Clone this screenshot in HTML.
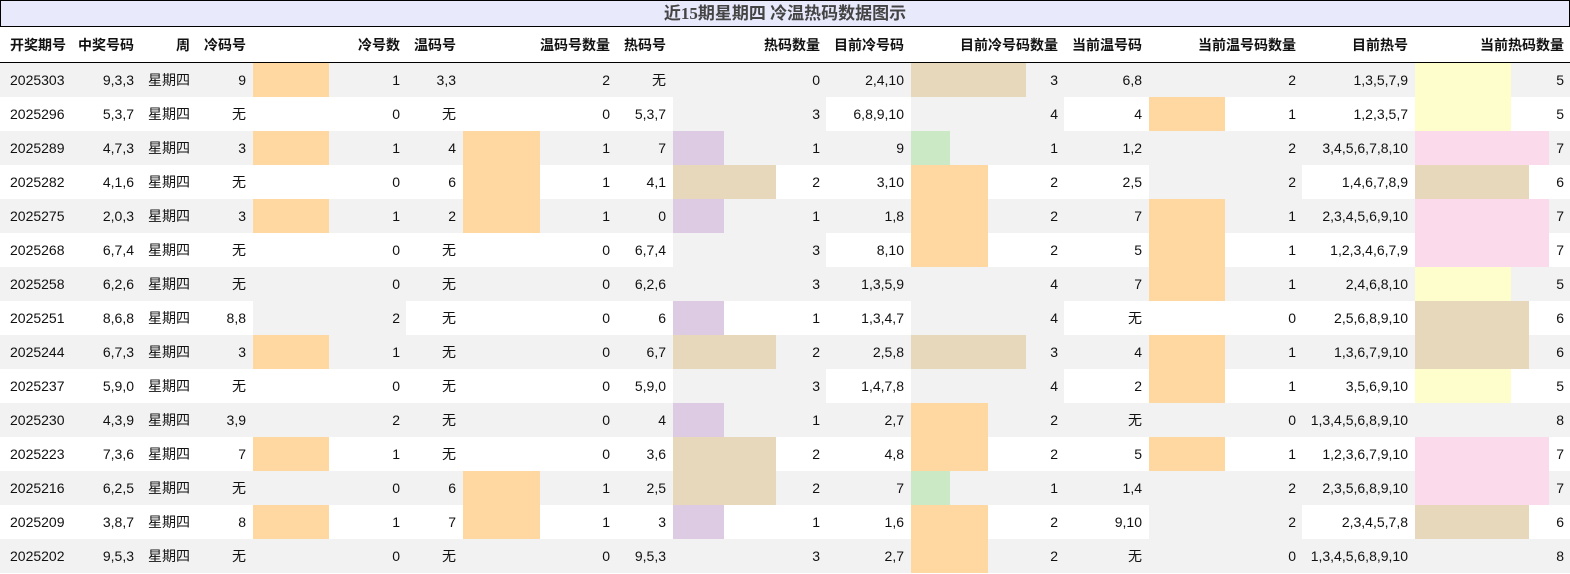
<!DOCTYPE html>
<html><head><meta charset="utf-8"><style>
*{margin:0;padding:0;box-sizing:border-box}
body{width:1570px;height:574px;background:#fff;font-family:"Liberation Sans","Noto Sans CJK SC",sans-serif;font-size:14px;color:#111;overflow:hidden}
.t{height:27px;border:1px solid #000;background:#e8eafc;text-align:center;font:bold 17px/25px "Liberation Serif","Noto Sans CJK SC",serif;color:#444;width:1570px}
.r{display:flex;height:34px;line-height:34px}
.h{height:36px;line-height:36px;font-weight:bold;font-size:14px;border-bottom:1px solid #000}
.h>div:nth-child(1){padding-left:8px}
.g{background:#f2f2f2}
.r>div{text-align:right;padding-right:6px;position:relative;white-space:nowrap}
.r>div:nth-child(1){width:72px;text-align:left;padding-left:10px}
.r>div:nth-child(2){width:68px}
.r>div:nth-child(3){width:56px}
.r>div:nth-child(4){width:56px}
.r>div:nth-child(5){width:154px}
.r>div:nth-child(6){width:56px}
.r>div:nth-child(7){width:154px}
.r>div:nth-child(8){width:56px}
.r>div:nth-child(9){width:154px}
.r>div:nth-child(10){width:84px}
.r>div:nth-child(11){width:154px}
.r>div:nth-child(12){width:84px}
.r>div:nth-child(13){width:154px}
.r>div:nth-child(14){width:112px}
.r>div:nth-child(15){width:154px;padding-right:4px}
i{position:absolute;left:1px;top:0;bottom:0}
.r span{position:relative}
.o{background:#fed7a1}.p{background:#ddcbe4}.n{background:#e7d8bc}.e{background:#cce9c6}.y{background:#fefdcc}.k{background:#fbdbeb}.s{background:#f2f2f2}
</style></head><body>
<div class="t">近15期星期四 冷温热码数据图示</div>
<div class="r h"><div>开奖期号</div><div>中奖号码</div><div>周</div><div>冷码号</div><div>冷号数</div><div>温码号</div><div>温码号数量</div><div>热码号</div><div>热码数量</div><div>目前冷号码</div><div>目前冷号码数量</div><div>当前温号码</div><div>当前温号码数量</div><div>目前热号</div><div>当前热码数量</div></div>

<div class="r g"><div>2025303</div><div>9,3,3</div><div>星期四</div><div>9</div><div><i class="o" style="width:76px"></i><span>1</span></div><div>3,3</div><div><i class="s" style="width:153px"></i><span>2</span></div><div>无</div><div><span>0</span></div><div>2,4,10</div><div><i class="n" style="width:115px"></i><span>3</span></div><div>6,8</div><div><i class="s" style="width:153px"></i><span>2</span></div><div>1,3,5,7,9</div><div><i class="y" style="width:96px"></i><span>5</span></div></div>

<div class="r"><div>2025296</div><div>5,3,7</div><div>星期四</div><div>无</div><div><span>0</span></div><div>无</div><div><span>0</span></div><div>5,3,7</div><div><i class="s" style="width:153px"></i><span>3</span></div><div>6,8,9,10</div><div><i class="s" style="width:153px"></i><span>4</span></div><div>4</div><div><i class="o" style="width:76px"></i><span>1</span></div><div>1,2,3,5,7</div><div><i class="y" style="width:96px"></i><span>5</span></div></div>

<div class="r g"><div>2025289</div><div>4,7,3</div><div>星期四</div><div>3</div><div><i class="o" style="width:76px"></i><span>1</span></div><div>4</div><div><i class="o" style="width:77px"></i><span>1</span></div><div>7</div><div><i class="p" style="width:51px"></i><span>1</span></div><div>9</div><div><i class="e" style="width:39px"></i><span>1</span></div><div>1,2</div><div><i class="s" style="width:153px"></i><span>2</span></div><div>3,4,5,6,7,8,10</div><div><i class="k" style="width:134px"></i><span>7</span></div></div>

<div class="r"><div>2025282</div><div>4,1,6</div><div>星期四</div><div>无</div><div><span>0</span></div><div>6</div><div><i class="o" style="width:77px"></i><span>1</span></div><div>4,1</div><div><i class="n" style="width:103px"></i><span>2</span></div><div>3,10</div><div><i class="o" style="width:77px"></i><span>2</span></div><div>2,5</div><div><i class="s" style="width:153px"></i><span>2</span></div><div>1,4,6,7,8,9</div><div><i class="n" style="width:114px"></i><span>6</span></div></div>

<div class="r g"><div>2025275</div><div>2,0,3</div><div>星期四</div><div>3</div><div><i class="o" style="width:76px"></i><span>1</span></div><div>2</div><div><i class="o" style="width:77px"></i><span>1</span></div><div>0</div><div><i class="p" style="width:51px"></i><span>1</span></div><div>1,8</div><div><i class="o" style="width:77px"></i><span>2</span></div><div>7</div><div><i class="o" style="width:76px"></i><span>1</span></div><div>2,3,4,5,6,9,10</div><div><i class="k" style="width:134px"></i><span>7</span></div></div>

<div class="r"><div>2025268</div><div>6,7,4</div><div>星期四</div><div>无</div><div><span>0</span></div><div>无</div><div><span>0</span></div><div>6,7,4</div><div><i class="s" style="width:153px"></i><span>3</span></div><div>8,10</div><div><i class="o" style="width:77px"></i><span>2</span></div><div>5</div><div><i class="o" style="width:76px"></i><span>1</span></div><div>1,2,3,4,6,7,9</div><div><i class="k" style="width:134px"></i><span>7</span></div></div>

<div class="r g"><div>2025258</div><div>6,2,6</div><div>星期四</div><div>无</div><div><span>0</span></div><div>无</div><div><span>0</span></div><div>6,2,6</div><div><i class="s" style="width:153px"></i><span>3</span></div><div>1,3,5,9</div><div><i class="s" style="width:153px"></i><span>4</span></div><div>7</div><div><i class="o" style="width:76px"></i><span>1</span></div><div>2,4,6,8,10</div><div><i class="y" style="width:96px"></i><span>5</span></div></div>

<div class="r"><div>2025251</div><div>8,6,8</div><div>星期四</div><div>8,8</div><div><i class="s" style="width:153px"></i><span>2</span></div><div>无</div><div><span>0</span></div><div>6</div><div><i class="p" style="width:51px"></i><span>1</span></div><div>1,3,4,7</div><div><i class="s" style="width:153px"></i><span>4</span></div><div>无</div><div><span>0</span></div><div>2,5,6,8,9,10</div><div><i class="n" style="width:114px"></i><span>6</span></div></div>

<div class="r g"><div>2025244</div><div>6,7,3</div><div>星期四</div><div>3</div><div><i class="o" style="width:76px"></i><span>1</span></div><div>无</div><div><span>0</span></div><div>6,7</div><div><i class="n" style="width:103px"></i><span>2</span></div><div>2,5,8</div><div><i class="n" style="width:115px"></i><span>3</span></div><div>4</div><div><i class="o" style="width:76px"></i><span>1</span></div><div>1,3,6,7,9,10</div><div><i class="n" style="width:114px"></i><span>6</span></div></div>

<div class="r"><div>2025237</div><div>5,9,0</div><div>星期四</div><div>无</div><div><span>0</span></div><div>无</div><div><span>0</span></div><div>5,9,0</div><div><i class="s" style="width:153px"></i><span>3</span></div><div>1,4,7,8</div><div><i class="s" style="width:153px"></i><span>4</span></div><div>2</div><div><i class="o" style="width:76px"></i><span>1</span></div><div>3,5,6,9,10</div><div><i class="y" style="width:96px"></i><span>5</span></div></div>

<div class="r g"><div>2025230</div><div>4,3,9</div><div>星期四</div><div>3,9</div><div><i class="s" style="width:153px"></i><span>2</span></div><div>无</div><div><span>0</span></div><div>4</div><div><i class="p" style="width:51px"></i><span>1</span></div><div>2,7</div><div><i class="o" style="width:77px"></i><span>2</span></div><div>无</div><div><span>0</span></div><div>1,3,4,5,6,8,9,10</div><div><i class="s" style="width:153px"></i><span>8</span></div></div>

<div class="r"><div>2025223</div><div>7,3,6</div><div>星期四</div><div>7</div><div><i class="o" style="width:76px"></i><span>1</span></div><div>无</div><div><span>0</span></div><div>3,6</div><div><i class="n" style="width:103px"></i><span>2</span></div><div>4,8</div><div><i class="o" style="width:77px"></i><span>2</span></div><div>5</div><div><i class="o" style="width:76px"></i><span>1</span></div><div>1,2,3,6,7,9,10</div><div><i class="k" style="width:134px"></i><span>7</span></div></div>

<div class="r g"><div>2025216</div><div>6,2,5</div><div>星期四</div><div>无</div><div><span>0</span></div><div>6</div><div><i class="o" style="width:77px"></i><span>1</span></div><div>2,5</div><div><i class="n" style="width:103px"></i><span>2</span></div><div>7</div><div><i class="e" style="width:39px"></i><span>1</span></div><div>1,4</div><div><i class="s" style="width:153px"></i><span>2</span></div><div>2,3,5,6,8,9,10</div><div><i class="k" style="width:134px"></i><span>7</span></div></div>

<div class="r"><div>2025209</div><div>3,8,7</div><div>星期四</div><div>8</div><div><i class="o" style="width:76px"></i><span>1</span></div><div>7</div><div><i class="o" style="width:77px"></i><span>1</span></div><div>3</div><div><i class="p" style="width:51px"></i><span>1</span></div><div>1,6</div><div><i class="o" style="width:77px"></i><span>2</span></div><div>9,10</div><div><i class="s" style="width:153px"></i><span>2</span></div><div>2,3,4,5,7,8</div><div><i class="n" style="width:114px"></i><span>6</span></div></div>

<div class="r g"><div>2025202</div><div>9,5,3</div><div>星期四</div><div>无</div><div><span>0</span></div><div>无</div><div><span>0</span></div><div>9,5,3</div><div><i class="s" style="width:153px"></i><span>3</span></div><div>2,7</div><div><i class="o" style="width:77px"></i><span>2</span></div><div>无</div><div><span>0</span></div><div>1,3,4,5,6,8,9,10</div><div><i class="s" style="width:153px"></i><span>8</span></div></div>
</body></html>
